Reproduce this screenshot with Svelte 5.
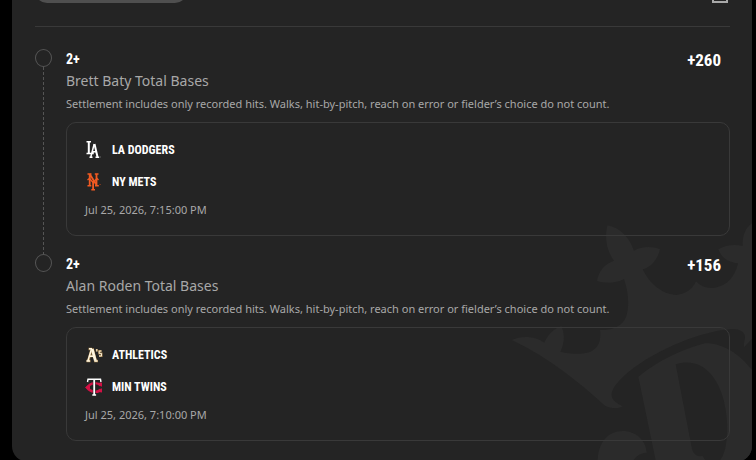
<script lang="ts">
    type Team = { name: string, logo: 'dodgers' | 'mets' | 'athletics' | 'twins' };
    type Leg = { line: string, market: string, odds: string, teams: Team[], start: string };

    const rules = 'Settlement includes only recorded hits. Walks, hit-by-pitch, reach on error or fielder’s choice do not count.';

    const legs: Leg[] = [
        {
            line: '2+',
            market: 'Brett Baty Total Bases',
            odds: '+260',
            teams: [
                { name: 'LA DODGERS', logo: 'dodgers' },
                { name: 'NY METS', logo: 'mets' }
            ],
            start: 'Jul 25, 2026, 7:15:00 PM'
        },
        {
            line: '2+',
            market: 'Alan Roden Total Bases',
            odds: '+156',
            teams: [
                { name: 'ATHLETICS', logo: 'athletics' },
                { name: 'MIN TWINS', logo: 'twins' }
            ],
            start: 'Jul 25, 2026, 7:10:00 PM'
        }
    ];
</script>

<main class="bet-slip">
    <svg class="watermark" viewBox="0 0 786 756" aria-hidden="true">
        <path d="M352 46C390 52 419 84 432 122C456 108 487 108 510 118C502 150 484 171 458 178C480 224 520 254 560 255C586 252 608 238 618 214C633 230 654 237 675 233C710 228 735 201 744 160C716 157 694 144 685 118C707 104 735 102 758 108C757 76 766 53 786 40V386L763 411C758 403 766 392 765 378C763 364 745 355 725 357C620 365 475 430 401 499C371 528 360 548 367 564C374 578 387 582 398 589C388 597 360 596 345 587C265 515 180 445 65 390C99 374 138 380 163 398C173 375 190 356 214 348C226 374 223 402 211 425C243 433 278 434 301 425C326 413 334 390 330 360C364 362 398 350 409 319C418 288 416 247 402 207C379 220 347 221 321 213C326 183 343 162 372 152C350 124 343 83 352 46Z" />
        <path fill-rule="evenodd" d="M445 500C505 452 575 418 645 400C695 398 748 430 786 480V756H498ZM557 463C630 441 680 492 701 570C712 617 716 665 706 715Q700 738 688 756H650L637 737C622 743 609 733 605 712Z" />
        <path d="M323 756C323 699 353 663 398 663C438 663 468 691 470 728C448 730 435 740 428 756Z" />
    </svg>

    <header class="slip-header">
        <button class="slip-pill" aria-label="Bet type"></button>
        <button class="share" aria-label="Share">
            <svg viewBox="0 0 20 24" aria-hidden="true">
                <path d="M6 9H3V23H17V9H14M10 16V2M6 6L10 2L14 6" />
            </svg>
        </button>
    </header>

    <ol class="legs">
        {#each legs as leg}
            <li class="leg">
                <div class="track"><span class="dot"></span></div>
                <div class="leg-body">
                    <div class="leg-top">
                        <strong class="line">{leg.line}</strong>
                        <strong class="odds">{leg.odds}</strong>
                    </div>
                    <div class="market">{leg.market}</div>
                    <p class="rules">{rules}</p>
                    <div class="event">
                        {#each leg.teams as team}
                            <div class="team">
                                <svg class="logo" viewBox="0 0 18 18" aria-hidden="true">
                                    {#if team.logo === 'dodgers'}
                                        <g fill="none" stroke="#fff">
                                            <path stroke-width="2" d="M3.8 .5V12.5M9.5 3L12.5 16" />
                                            <path stroke-width="1.5" d="M1.5 .8H6M1.5 12.5H8V10M9.2 3L5.8 16M7.5 10.8H11.5M4.5 16.2H7.5M10.5 16.2H14.2" />
                                        </g>
                                        <path fill="#777" d="M14.8 15.6h1v1h-1z" />
                                    {:else if team.logo === 'mets'}
                                        <g fill="none" stroke="#f15a22">
                                            <path stroke-width="1.8" d="M4.7 1V13M11.5 1V13M8.1 9V17M4.7 1L11.5 12" />
                                            <path stroke-width="1.4" d="M2.5 1H6.5M9.8 1H13.5M2.5 12.8H6.3M10 12.8H13.8M6.3 16.8H10M2.5 7L4.5 5.5L8.1 9.5L12 5.5L13.5 7" />
                                        </g>
                                        <path fill="#a64520" d="M14.6 11h1v1h-1z" />
                                    {:else if team.logo === 'athletics'}
                                        <g fill="none" stroke="#a5824c">
                                            <path stroke-width="2.6" d="M7 2L3.2 15M7.5 2.5L10.5 14M1.5 15H5.5M9 15H13M4 10H10M3.5 3H7" />
                                            <path stroke-width="2" d="M16.5 5H14.2V7.4H16.5V10H14M11.8 3V5.5" />
                                        </g>
                                        <g fill="none" stroke="#fff6e0">
                                            <path stroke-width="1.4" d="M6.5 3L3 14.5M4 2.8H7M1.5 15H5M4.5 10.3H9.5M9.5 15H12.5" />
                                            <path stroke-width="2.8" d="M7.2 3L10.3 14.5" />
                                            <path stroke-width=".9" d="M11.8 3V5.5M16.5 5H14.2V7.4H16.5V10H14" />
                                        </g>
                                    {:else}
                                        <path fill="none" stroke="#d31145" stroke-width="2.4" d="M16 7.5C12 3.8 6 4.3 2 9.5C6 14.7 12 15.2 16 11.5" />
                                        <path fill="#d31145" d="M13 5L17 4.5V9ZM13 14L17 14.5V10ZM0 9.5L5 6V13Z" />
                                        <path fill="none" stroke="#242424" stroke-width="2.8" d="M9.2 2V15" />
                                        <path fill="none" stroke="#fff" stroke-width="1.8" d="M9.2 1V17" />
                                        <path fill="none" stroke="#fff" stroke-width="1.4" d="M2.5 4L3 1.3H15.5L16 4M7.3 17H11.1" />
                                    {/if}
                                </svg>
                                <span class="team-name">{team.name}</span>
                            </div>
                        {/each}
                        <time class="start">{leg.start}</time>
                    </div>
                </div>
            </li>
        {/each}
    </ol>
</main>

<style>
    :global(body) {
        background: #000;
        overflow: hidden;
    }

    .bet-slip {
        position: relative;
        margin: -21px 4px 0 12px;
        padding: 0 22px 21px 23px;
        background: #242424;
        border-radius: 16px;
        overflow: hidden;
        font-family: "Noto Sans", "Open Sans", sans-serif;
        color: #a8a8a8;
    }

    .watermark {
        position: absolute;
        right: 0;
        bottom: 0;
        width: 262px;
        fill: #2b2b2b;
    }

    .slip-header {
        position: relative;
        display: flex;
        justify-content: space-between;
        height: 47px;
        border-bottom: 1px solid #393939;
    }

    .slip-pill {
        width: 152px;
        height: 24px;
        padding: 0;
        border: 0;
        border-radius: 12px;
        background: #4f4f4f;
    }

    .share {
        height: 24px;
        padding: 0;
        border: 0;
        background: none;
    }
    .share svg {
        display: block;
        width: 20px;
        height: 24px;
        fill: none;
        stroke: #a8a8a8;
        stroke-width: 2;
    }

    .legs {
        position: relative;
        display: flex;
        flex-direction: column;
        margin: 22px 0 0;
        padding: 0;
        list-style: none;
    }

    .leg {
        display: grid;
        grid-template-columns: 17px 1fr;
        column-gap: 14px;
    }
    .leg:not(:last-child) .leg-body { padding-bottom: 18px; }

    .track {
        display: flex;
        flex-direction: column;
        align-items: center;
    }
    .leg:not(:last-child) .track::after {
        content: '';
        flex: 1;
        width: 1px;
        background: repeating-linear-gradient(#555 0 3px, transparent 3px 5px);
    }

    .dot {
        box-sizing: border-box;
        width: 17px;
        height: 18px;
        border: 1px solid #555;
        border-radius: 50%;
    }

    .leg-top {
        display: flex;
        justify-content: space-between;
        height: 20px;
        padding-right: 9px;
        font-family: "Roboto Condensed", "Liberation Sans Narrow", "Liberation Sans", sans-serif;
        color: #fff;
        line-height: 20px;
    }
    .line { font-size: 14px; }
    .odds { font-size: 17px; line-height: 23px; }

    .market {
        font-size: 14px;
        line-height: 24px;
    }

    .rules {
        margin: 0 0 7px;
        font-size: 11px;
        line-height: 22px;
    }

    .event {
        display: flex;
        flex-direction: column;
        gap: 14px;
        padding: 18px 18px 20px;
        border: 1px solid #393939;
        border-radius: 10px;
    }

    .team {
        display: flex;
        align-items: center;
        gap: 9px;
        height: 18px;
    }

    .logo {
        width: 18px;
        height: 18px;
    }

    .team-name {
        font-family: "Roboto Condensed", "Liberation Sans Narrow", "Liberation Sans", sans-serif;
        font-size: 12px;
        font-weight: 700;
        color: #fff;
    }

    .start {
        font-size: 11px;
        line-height: 10px;
    }
</style>
